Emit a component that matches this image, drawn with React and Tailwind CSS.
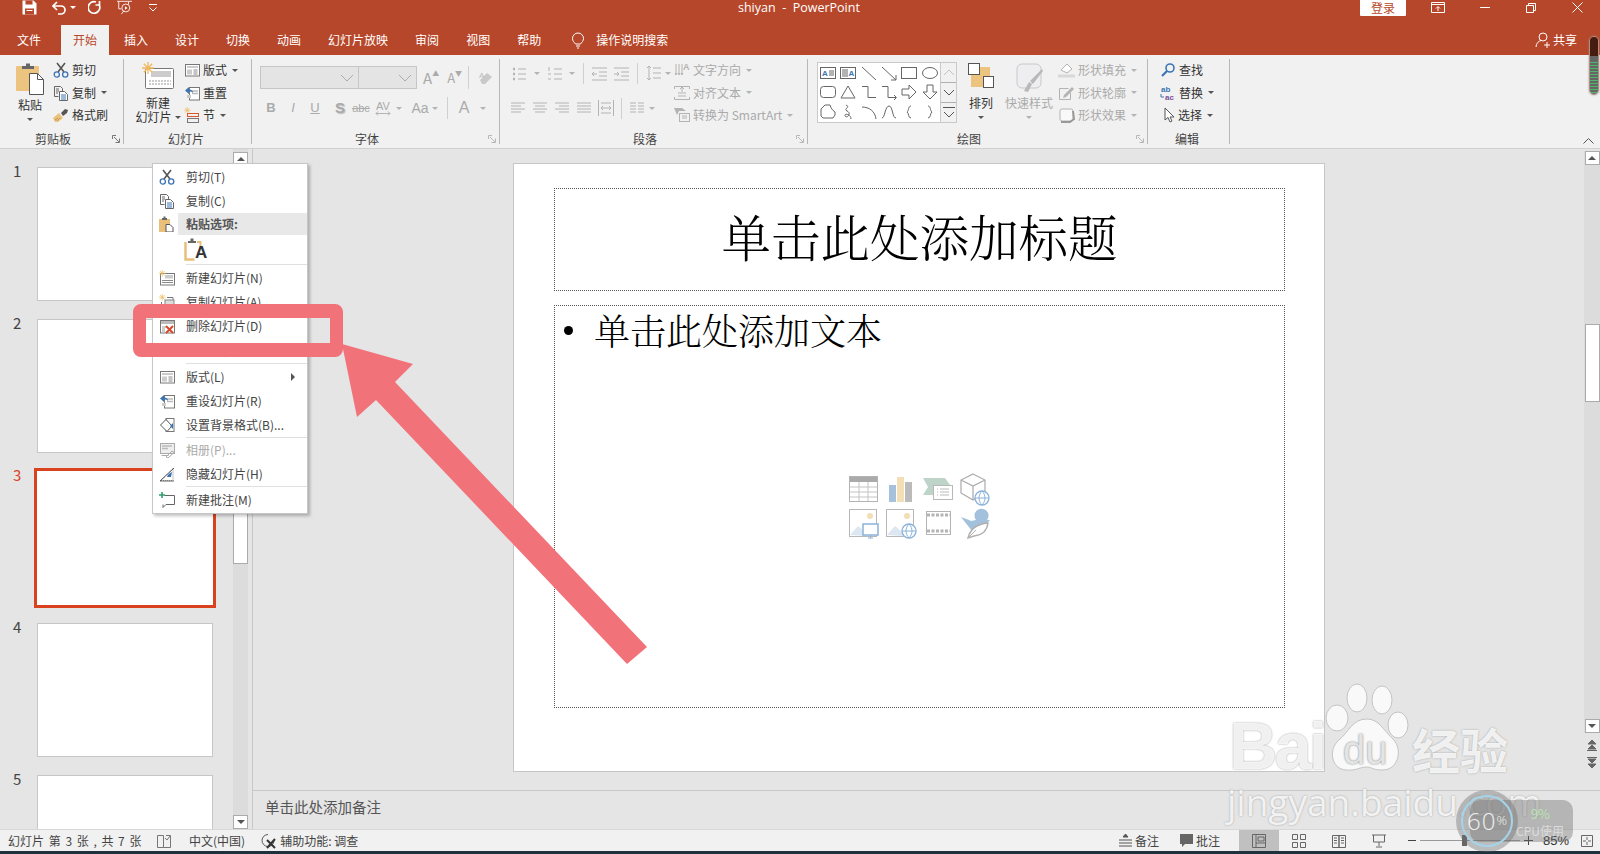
import { useState } from "react";

// small svg wrapper, every ribbon icon goes through this
const I = ({ w = 16, h = 16, vb, children, className = "" }) => (
  <svg width={w} height={h} viewBox={vb || `0 0 ${w} ${h}`} fill="none" className={`shrink-0 ${className}`}>
    {children}
  </svg>
);

const Caret = ({ dim, className = "" }) => (
  <span className={`inline-block h-0 w-0 shrink-0 border-x-[3px] border-t-[3px] border-x-transparent ${dim ? "border-t-[#b4b4b4]" : "border-t-[#555]"} ${className}`} />
);

const Launcher = ({ dim }) => (
  <I w={8} h={8}>
    <path d="M.5 4V.5H4M2 2l5 5M7.5 3.5v4h-4" stroke={dim ? "#b8b8b8" : "#777"} />
  </I>
);

/* ---- icons ---- */
const Cut = () => (
  <I>
    <path d="M4 1l7 9M12 1L5 10" stroke="#555" strokeWidth="1.6" />
    <circle cx="3.8" cy="12.5" r="2.6" stroke="#3b74b3" strokeWidth="1.3" />
    <circle cx="12.2" cy="12.5" r="2.6" stroke="#3b74b3" strokeWidth="1.3" />
  </I>
);
const Copy = () => (
  <I>
    <path d="M1.5 1.5h6l2 2v3M1.5 1.5v10h4" stroke="#666" />
    <path d="M3 4h3M3 6h3M3 8h2" stroke="#666" />
    <path d="M6.5 6.5h5l3 3v6h-8z" fill="#fff" stroke="#666" />
    <path d="M8 10h5M8 12h5M8 14h5" stroke="#3b74b3" />
  </I>
);
const Brush = () => (
  <I>
    <path d="M0 11l6-5 4 5-5 4H2z" fill="#eac27e" />
    <path d="M2 13l3-2M4 14l3-3" stroke="#c69a4c" />
    <path d="M8 6l4-4 3 1-1 3-4 3z" fill="#555" />
  </I>
);
const PasteBig = () => (
  <I w={30} h={34}>
    <rect x="1" y="4" width="23" height="25" rx="1" fill="#edc47f" />
    <path d="M7 7V4h4V1.5h4V4h4v3z" fill="#666" />
    <path d="M14.5 11.5h8l6 6v15h-14z" fill="#fff" stroke="#555" />
    <path d="M22.5 11.5v6h6" stroke="#555" />
  </I>
);
const PasteSmall = () => (
  <I>
    <rect x="1" y="3" width="11" height="13" fill="#e9bf79" />
    <path d="M4 4V2h1.5V.5h2V2H9v2z" fill="#666" />
    <path d="M8 8.5h4l3 3v4.500H8z" fill="#fff" stroke="#555" />
  </I>
);
const Star = ({ x = 0, y = 0, s = 1 }) => (
  <g transform={`translate(${x} ${y}) scale(${s})`} stroke="#eeb95f" strokeWidth="1.1">
    <path d="M5 0v10M0 5h10M1.500 1.500l7 7M8.500 1.500l-7 7" />
  </g>
);
const NewSlide = () => (
  <I>
    <rect x="1.500" y="3.500" width="14" height="11.500" fill="#fff" stroke="#777" />
    <rect x="6" y="5" width="8" height="3.500" fill="#ccc" />
    <path d="M3 10.500h11M3 12.500h11" stroke="#888" />
    <Star x={0} y={0} s={0.65} />
  </I>
);
const DupSlide = () => (
  <I>
    <Star x={0} y={0} s={0.65} />
    <path d="M8 3.500h6v3M2.500 8v7h8" stroke="#777" />
    <rect x="6" y="6" width="9" height="6" fill="#ddd" stroke="#888" />
  </I>
);
const DelSlide = () => (
  <I>
    <rect x="1.500" y="2.500" width="14" height="12.500" fill="#fff" stroke="#777" />
    <rect x="2" y="3" width="13" height="3" fill="#bbb" />
    <path d="M3 9h4M3 11h3M3 13h3" stroke="#999" />
    <path d="M7 8l7 7M14 8l-7 7" stroke="#d8492b" strokeWidth="2" />
  </I>
);
const Layout = () => (
  <I>
    <rect x="1.500" y="2.500" width="14" height="11.500" fill="#fff" stroke="#777" />
    <rect x="3" y="4" width="11" height="2" fill="#ccc" />
    <rect x="3" y="7.500" width="5" height="5" fill="#ccc" />
    <path d="M9.500 8h4M9.500 10h4M9.500 12h4" stroke="#888" />
  </I>
);
const Reset = () => (
  <I>
    <rect x="5.500" y="2.500" width="10" height="12.500" fill="#fff" stroke="#777" />
    <path d="M8 6h6M8 8.500h6" stroke="#bbb" strokeWidth="1.500" />
    <rect x="3" y="10" width="4" height="3" fill="#ccc" />
    <path d="M1 5.500L5 2v2.500c3 0 4 1.500 4 3.500-1-1.500-2-1.500-4-1.500V9z" fill="#3b74b3" />
  </I>
);
const Section = () => (
  <I>
    <Star x={0} y={0} s={0.65} />
    <rect x="3.500" y="6.500" width="11" height="3" stroke="#d8592b" />
    <rect x="3.500" y="11.500" width="11" height="4" stroke="#777" />
  </I>
);
const BgFormat = () => (
  <I>
    <rect x="7" y="1.500" width="8" height="13" fill="#fff" stroke="#777" />
    <path d="M1.500 8L7 2.500 13 9l-5 5.500z" fill="#fff" stroke="#555" />
    <path d="M11 9l3-3v6z" fill="#3b74b3" />
  </I>
);
const Album = () => (
  <I>
    <rect x="1.500" y="1.500" width="14" height="10" fill="#eee" stroke="#aaa" />
    <path d="M3 4h10M3 6.500h6" stroke="#bbb" strokeWidth="1.500" />
    <path d="M2.500 13.500h7M7 15l6-6 2 1.500-6 5.500z" stroke="#aaa" />
  </I>
);
const HideSlide = () => (
  <I>
    <path d="M2 14.500L14 2.500v12z" fill="#fff" stroke="#888" strokeDasharray="1 1" />
    <path d="M1 15h14" stroke="#666" />
    <path d="M1 15L15 2" stroke="#555" />
    <path d="M8 11c1-3 3-4 5-5l-1 5z" fill="#3b74b3" />
  </I>
);
const NewNote = () => (
  <I>
    <path d="M5.500 3.500h10v9H7l-3 3v-3" stroke="#666" />
    <path d="M3 0v6M0 3h6" stroke="#2f9e6e" strokeWidth="1.600" />
  </I>
);
const PasteA = () => (
  <svg width="18" height="23" viewBox="0 0 18 23" fill="none" className="shrink-0">
    <path d="M1.500 4v17.500h9" stroke="#e9bf79" strokeWidth="2.500" />
    <path d="M13 4h3.500v6" stroke="#e9bf79" strokeWidth="2" />
    <path d="M4 5V3h2.500V.5h3V3H12v2z" fill="#666" />
  </svg>
);

const Gal = ({ children }) => (
  <div className="flex items-center justify-center">
    <I>{children}</I>
  </div>
);
const shapeStroke = { stroke: "#666", fill: "none" };

function Shapes() {
  return (
    <div className="grid h-[59px] w-[122px] grid-cols-6 grid-rows-3 bg-white">
      <Gal>
        <rect x=".5" y="2.500" width="15" height="11" {...shapeStroke} />
        <text x="2" y="11" fontSize="8" fontWeight="700" fill="#3b74b3" fontFamily="Liberation Sans">A</text>
        <path d="M9 6h5M9 8h5M9 10h5" {...shapeStroke} />
      </Gal>
      <Gal>
        <rect x=".5" y="2.500" width="15" height="11" {...shapeStroke} />
        <path d="M3 4v8M5 4v8M7 4v8" {...shapeStroke} />
        <text x="8.500" y="11" fontSize="8" fontWeight="700" fill="#3b74b3" fontFamily="Liberation Sans">A</text>
      </Gal>
      <Gal><path d="M1 2l14 13" {...shapeStroke} /></Gal>
      <Gal><path d="M1 2l14 13M15 10v5h-5" {...shapeStroke} /></Gal>
      <Gal><rect x=".5" y="2.500" width="15" height="11" {...shapeStroke} /></Gal>
      <Gal><ellipse cx="8" cy="8" rx="7.500" ry="5.500" {...shapeStroke} /></Gal>
      <Gal><rect x=".5" y="2.500" width="15" height="11" rx="3" {...shapeStroke} /></Gal>
      <Gal><path d="M8 2l7 12H1z" {...shapeStroke} /></Gal>
      <Gal><path d="M1 2.500h6v11h8" {...shapeStroke} /></Gal>
      <Gal><path d="M1 2.500h6v11h8M13 11l2.500 2.500L13 16" {...shapeStroke} /></Gal>
      <Gal><path d="M1 5h7V1l7 7-7 7v-4H1z" {...shapeStroke} /></Gal>
      <Gal><path d="M5 1h6v7h4l-7 7-7-7h4z" {...shapeStroke} /></Gal>
      <Gal><path d="M1 5l4-4h5c1 3 2 5 5 7v3l-2 3H3l-2-2z" {...shapeStroke} /></Gal>
      <Gal><path d="M6 1c5 2-3 4 1 6 5 2 0 8-2 5-1-3 6-2 6 3" {...shapeStroke} /></Gal>
      <Gal><path d="M1 3c7 0 13 4 14 12" {...shapeStroke} /></Gal>
      <Gal><path d="M1 14c3 0 3-12 7-12s3 12 7 12" {...shapeStroke} /></Gal>
      <Gal><path d="M10 2C7 2 8 7 6 8c2 1 1 6 4 6" {...shapeStroke} /></Gal>
      <Gal><path d="M6 2c3 0 2 5 4 6-2 1-1 6-4 6" {...shapeStroke} /></Gal>
    </div>
  );
}

/* ---- ribbon pieces ---- */
const Group = ({ className, label, launcher, dim, children }) => (
  <div className={`flex h-full shrink-0 flex-col border-r border-[#b8b8b8] ${className}`}>
    <div className="flex h-[74px]">{children}</div>
    <div className="grid h-[11px] grid-cols-[1fr_auto_1fr] items-center pr-[3px] text-xs leading-[11px] text-[#444]">
      <span />
      <span className={launcher ? "mr-[14px]" : ""}>{label}</span>
      <span className="justify-self-end">{launcher && <Launcher dim={dim} />}</span>
    </div>
  </div>
);

const Small = ({ icon, text, caret, dim, className = "" }) => (
  <div className={`flex h-[22.5px] items-center whitespace-nowrap ${dim ? "text-[#aaa]" : "text-[#333]"} ${className}`}>
    {icon}
    <span className="ml-[3px]">{text}</span>
    {caret && <Caret dim={dim} className="ml-[5px]" />}
  </div>
);

const Tab = ({ children, active }) => (
  <div className={`flex h-[30px] items-center px-3 ${active ? "bg-[#f1f1f1] text-[#b7472a]" : "text-white"}`}>{children}</div>
);

const TitleBar = () => (
  <div className="flex h-[25px] shrink-0 items-center bg-[#b7472a] pb-[10px] text-white">
    <div className="flex w-[738px] items-center pl-[22px]">
      <I w={15} h={15} vb="0 0 15 15">
        <path d="M.5.500h11l3 3v11H.5z" fill="#fff" />
        <path d="M3.500.500h7v4h-7zM3 8.500h9v6H3z" fill="#b7472a" />
        <rect x="4.500" y="10" width="6" height="1" fill="#fff" />
      </I>
      <I w={14} h={14} className="ml-[15px]">
        <path d="M5 1L1 5l4 4M1.500 5H9a4 4 0 010 8H6" stroke="#fff" strokeWidth="1.700" />
      </I>
      <Caret className="ml-[4px] border-t-white!" />
      <I w={15} h={15} className="ml-[12px]">
        <path d="M11.500 1v4h-4M11 4.500A5.800 5.800 0 118 2" stroke="#fff" strokeWidth="1.700" />
      </I>
      <I w={17} h={15} vb="0 0 17 17" className="ml-[13px]">
        <path d="M0 1.500h17M2 2v8h3M13 2v3M8 12l-3 4" stroke="#fff" />
        <circle cx="10" cy="9" r="4.500" stroke="#fff" />
        <path d="M9 7l3 2-3 2z" fill="#fff" />
      </I>
      <I w={10} h={10} className="ml-[15px]">
        <path d="M1 1.500h8M1.500 4.500L5 8l3.500-3.500" stroke="#fff" />
      </I>
    </div>
    <div className="h-[15px] w-[622px] font-['Open_Sans',sans-serif] text-[12.500px] leading-[15px] whitespace-pre">shiyan  -  PowerPoint</div>
    <div className="flex h-[16px] w-[46px] items-center justify-center self-start rounded-b-[1px] bg-white text-xs leading-[16px] text-[#b7472a]">登录</div>
    <div className="flex flex-1 items-center">
      <I w={14} h={11} className="ml-[25px]">
        <path d="M.5.500h13v10H.5zM1 2.500h12M7 9V5M5 6.500L7 4.500l2 2" stroke="#fff" />
      </I>
      <div className="ml-[35px] h-[1px] w-[10px] bg-white" />
      <I w={10} h={10} className="ml-[36px]">
        <path d="M.5 2.500h7v7h-7zM2.500 2.500v-2h7v7h-2" stroke="#fff" />
      </I>
      <I w={11} h={11} className="ml-[36px]">
        <path d="M.5.500l10 10M10.500.500l-10 10" stroke="#fff" />
      </I>
    </div>
  </div>
);

const TabBar = () => (
  <div className="flex h-[30px] shrink-0 items-center bg-[#b7472a] pl-[5px] text-xs">
    <Tab>文件</Tab>
    <div className="ml-[8px] flex gap-[3px]">
      <Tab active>开始</Tab>
      <Tab>插入</Tab>
      <Tab>设计</Tab>
      <Tab>切换</Tab>
      <Tab>动画</Tab>
      <Tab>幻灯片放映</Tab>
      <Tab>审阅</Tab>
      <Tab>视图</Tab>
      <Tab>帮助</Tab>
    </div>
    <I w={14} h={17} className="ml-[18px]">
      <path d="M4.500 12C3 10 1.500 9 1.500 6.500a5.500 5.500 0 0111 0C12.500 9 11 10 9.500 12zM5 14h4M6 16h2" stroke="#fff" />
    </I>
    <span className="ml-[11px] text-white">操作说明搜索</span>
    <div className="ml-auto flex items-center pr-[23px] text-white">
      <I w={16} h={16}>
        <circle cx="8" cy="5" r="4" stroke="#fff" />
        <path d="M1 15c0-4 3-6 5-6.500M9 13h6M12 10v6" stroke="#fff" />
      </I>
      <span className="ml-[2px]">共享</span>
    </div>
  </div>
);

function Ribbon() {
  const gray = "#b3b3b3";
  return (
    <div className="flex h-[94px] shrink-0 border-b border-[#d0d0d0] bg-[#f1f1f1] pt-[4px] pb-[4px] text-xs">
      {/* clipboard */}
      <Group className="w-[124px]" label="剪贴板" launcher>
        <div className="ml-[15px] flex w-[30px] flex-col items-center pt-[3px] text-[#333]">
          <PasteBig />
          <span className="mt-[1px]">粘贴</span>
          <Caret className="mt-[5px]" />
        </div>
        <div className="ml-[8px] flex flex-col">
          <Small icon={<Cut />} text="剪切" />
          <Small icon={<Copy />} text="复制" caret />
          <Small icon={<Brush />} text="格式刷" />
        </div>
      </Group>

      {/* slides */}
      <Group className="w-[128px]" label="幻灯片">
        <div className="ml-[10px] flex w-[48px] flex-col items-center pt-[3px] text-[#333]">
          <I w={32} h={27}>
            <rect x="3.500" y="6.500" width="28" height="20" rx="1" fill="#fff" stroke="#777" />
            <rect x="9" y="9" width="20" height="6" fill="#ccc" />
            <path d="M7 19h22M7 22h22" stroke="#999" strokeDasharray="2 1" />
            <Star x={0} y={0} s={1.200} />
          </I>
          <span className="mt-[7px] leading-[14px]">新建</span>
          <span className="flex items-center whitespace-nowrap leading-[14px]">幻灯片<Caret className="ml-[3px]" /></span>
        </div>
        <div className="ml-[2px] flex flex-col">
          <Small icon={<Layout />} text="版式" caret />
          <Small icon={<Reset />} text="重置" />
          <Small icon={<Section />} text="节" caret />
        </div>
      </Group>

      {/* font, all disabled */}
      <Group className="w-[248px]" label="字体" launcher dim>
        <div className="flex flex-col pl-[8px]">
          <div className="mt-[7px] flex h-[23px] items-center">
            <div className="flex h-[23px] w-[99px] items-center justify-end border border-[#c6c6c6] bg-[#e4e4e4] pr-[4px]">
              <I w={14} h={8}><path d="M1 1l6 6 6-6" stroke="#aaa" /></I>
            </div>
            <div className="flex h-[23px] w-[58px] items-center justify-end border border-l-0 border-[#c6c6c6] bg-[#e4e4e4] pr-[4px]">
              <I w={14} h={8}><path d="M1 1l6 6 6-6" stroke="#aaa" /></I>
            </div>
            <span className="ml-[6px] text-[15px] text-[#aaa]">A</span>
            <span className="mb-[8px] text-[7px] text-[#aaa]">▲</span>
            <span className="ml-[8px] text-[13px] text-[#aaa]">A</span>
            <span className="mb-[8px] text-[7px] text-[#aaa]">▼</span>
            <div className="ml-[6px] h-[23px] w-[1px] bg-[#cfcfcf]" />
            <I w={16} h={16} className="ml-[9px]">
              <path d="M2 10l7-7 5 4-7 7H4z" fill="#c9c9c9" />
              <text x="1" y="8" fontSize="8" fill="#bbb" fontFamily="Liberation Sans">A</text>
            </I>
          </div>
          <div className="mt-[8px] flex h-[22px] items-center font-['Liberation_Sans',sans-serif] text-[#aaa]">
            <span className="w-[22px] text-center text-[13px] font-bold">B</span>
            <span className="w-[22px] text-center text-[13px] italic">I</span>
            <span className="w-[22px] text-center text-[13px] underline">U</span>
            <span className="ml-[3px] w-[22px] text-center text-[15px] font-bold [text-shadow:1px_1px_1px_#bbb]">S</span>
            <span className="w-[20px] text-center text-[11px] line-through">abc</span>
            <span className="ml-[4px] flex w-[16px] flex-col items-center text-[11px] leading-[10px]">AV<I w={16} h={5}><path d="M1 2.500h14M3 .5L1 2.500l2 2M13 .5l2 2-2 2" stroke={gray} /></I></span>
            <Caret dim className="ml-[5px]" />
            <span className="ml-[8px] w-[20px] text-center text-[14px]">Aa</span>
            <Caret dim className="ml-[2px]" />
            <div className="ml-[9px] h-[22px] w-[1px] bg-[#cfcfcf]" />
            <span className="ml-[10px] w-[12px] text-center text-[16px]">A</span>
            <Caret dim className="ml-[10px]" />
          </div>
        </div>
      </Group>

      {/* paragraph */}
      <Group className="w-[308px]" label="段落" launcher dim>
        <div className="flex w-[174px] flex-col pl-[11px]">
          <div className="mt-[3px] flex h-[23px] items-center">
            <I w={16} h={16}>
              <path d="M7 3h8M7 8h8M7 13h8" stroke={gray} />
              <path d="M2 3h2M2 8h2M2 13h2" stroke={gray} strokeWidth="2.500" />
            </I>
            <Caret dim className="ml-[7px]" />
            <I w={16} h={16} className="ml-[7px]">
              <path d="M7 3h8M7 8h8M7 13h8" stroke={gray} />
              <path d="M2 1v4M1 8h3M1 13h3" stroke={gray} />
            </I>
            <Caret dim className="ml-[6px]" />
            <div className="ml-[8px] h-[21px] w-[1px] bg-[#cfcfcf]" />
            <I w={17} h={16} className="ml-[7px]">
              <path d="M1 2h15M8 6h8M8 10h8M1 14h15M6 8H1M3 6L1 8l2 2" stroke={gray} />
            </I>
            <I w={17} h={16} className="ml-[5px]">
              <path d="M1 2h15M8 6h8M8 10h8M1 14h15M1 8h5M4 6l2 2-2 2" stroke={gray} />
            </I>
            <div className="ml-[7px] h-[21px] w-[1px] bg-[#cfcfcf]" />
            <I w={15} h={17} className="ml-[8px]">
              <path d="M3 1v14M1 3l2-2 2 2M1 13l2 2 2-2M7 3h8M7 8h8M7 13h8" stroke={gray} />
            </I>
            <Caret dim className="ml-[4px]" />
          </div>
          <div className="mt-[12px] flex h-[22px] items-center">
            <I w={14} h={14}><path d="M0 2h14M0 5h10M0 8h14M0 11h10" stroke={gray} /></I>
            <I w={14} h={14} className="ml-[8px]"><path d="M0 2h14M2 5h10M0 8h14M2 11h10" stroke={gray} /></I>
            <I w={14} h={14} className="ml-[8px]"><path d="M0 2h14M4 5h10M0 8h14M4 11h10" stroke={gray} /></I>
            <I w={14} h={14} className="ml-[8px]"><path d="M0 2h14M0 5h14M0 8h14M0 11h14" stroke={gray} /></I>
            <I w={16} h={16} className="ml-[7px]"><path d="M.5 0v16M15.500 0v16M3 8h10M5 6L3 8l2 2M11 6l2 2-2 2M3 3h10M3 13h10" stroke={gray} /></I>
            <div className="ml-[7px] h-[21px] w-[1px] bg-[#cfcfcf]" />
            <I w={14} h={14} className="ml-[8px]"><path d="M0 2h6M8 2h6M0 5h6M8 5h6M0 8h6M8 8h6M0 11h6M8 11h6" stroke={gray} /></I>
            <Caret dim className="ml-[5px]" />
          </div>
        </div>
        <div className="flex flex-col text-[#aaa]">
          <Small dim caret text="文字方向" icon={
            <I><path d="M2 2v10M5 2v10M8 2v10M1 11l1 2 1-2M4 11l1 2 1-2M7 11l1 2 1-2" stroke={gray} /><text x="9" y="8" fontSize="9" fontWeight="700" fill={gray} fontFamily="Liberation Sans">A</text></I>
          } />
          <Small dim caret text="对齐文本" icon={
            <I><path d="M.5 4V1.500h15V4M.5 12v2.500h15V12M4 8h8M4 11h8M8 2v5M6 4l2-2 2 2" stroke={gray} /></I>
          } />
          <Small dim caret text="转换为 SmartArt" icon={
            <I><path d="M0 1h8l4 3H5l-2 4z" fill={gray} /><rect x="5.500" y="6.500" width="10" height="8" fill="#f1f1f1" stroke={gray} /><path d="M8 9h5M8 11h5" stroke={gray} /></I>
          } />
        </div>
      </Group>

      {/* drawing */}
      <Group className="w-[340px]" label="绘图" launcher dim>
        <div className="ml-[9px] mt-[3px] flex h-[61px] border border-[#c9c9c9]">
          <Shapes />
          <div className="flex w-[16px] flex-col border-l border-[#c9c9c9]">
            <div className="flex flex-1 items-center justify-center"><I w={12} h={7}><path d="M1 6l5-5 5 5" stroke="#c4c4c4" /></I></div>
            <div className="flex flex-1 items-center justify-center border-y border-[#b0b0b0]"><I w={12} h={7}><path d="M1 1l5 5 5-5" stroke="#555" /></I></div>
            <div className="flex flex-1 flex-col items-center justify-center gap-[3px]"><div className="h-[1px] w-[12px] bg-[#555]" /><I w={12} h={7}><path d="M1 1l5 5 5-5" stroke="#555" /></I></div>
          </div>
        </div>
        <div className="ml-[9px] flex w-[30px] flex-col items-center pt-[3px] text-[#333]">
          <I w={28} h={27}>
            <rect x="11" y="5" width="12" height="12" fill="#edc47f" />
            <rect x="4" y="13" width="12" height="12" fill="#edc47f" />
            <rect x="1.500" y="1.500" width="11" height="11" fill="#fff" stroke="#555" />
            <rect x="16.500" y="14.500" width="10" height="11" fill="#fff" stroke="#555" />
          </I>
          <span className="mt-[6px] whitespace-nowrap">排列</span>
          <Caret className="mt-[5px]" />
        </div>
        <div className="ml-[8px] flex w-[50px] flex-col items-center pt-[4px] text-[#aaa]">
          <I w={27} h={30}>
            <rect x="1" y="1" width="24" height="24" rx="5" fill="#eeeef0" stroke="#c8c8c8" />
            <path d="M8 28l5-9 3 2-4 8zM14 18L26 6l1 2-10 13z" fill="#b8b8b8" />
          </I>
          <span className="mt-[2px] whitespace-nowrap">快速样式</span>
          <Caret dim className="mt-[5px]" />
        </div>
        <div className="ml-[4px] flex flex-col">
          <Small dim caret text="形状填充" icon={
            <I w={17} h={16}><path d="M3 8l6-6 5 5-5 4z" stroke={gray} fill="#fff" /><path d="M0 14h17" stroke="#d8d8d8" strokeWidth="3" /></I>
          } />
          <Small dim caret text="形状轮廓" icon={
            <I w={17} h={16}><path d="M1.500 3.500h9M1.500 3.500v11h11v-7" stroke={gray} /><path d="M6 10l8-8 2 2-8 8-3 1z" fill={gray} /></I>
          } />
          <Small dim caret text="形状效果" icon={
            <I w={17} h={16}><rect x="2" y="2" width="13" height="12" rx="2" fill="#f9f9f9" stroke={gray} /><path d="M15 4l1 8-4 3H3" stroke="#999" strokeWidth="2" /></I>
          } />
        </div>
      </Group>

      {/* editing */}
      <Group className="w-[82px]" label="编辑">
        <div className="ml-[12px] flex flex-col">
          <Small text="查找" icon={
            <I><circle cx="10" cy="6" r="4" stroke="#3b74b3" strokeWidth="1.600" /><path d="M7 9l-5 5" stroke="#3b74b3" strokeWidth="2.200" /></I>
          } />
          <Small caret text="替换" icon={
            <I>
              <text x="1" y="7" fontSize="8" fontWeight="700" fill="#3b74b3" fontFamily="Liberation Sans">ab</text>
              <text x="5" y="15" fontSize="8" fontWeight="700" fill="#7a4f9a" fontFamily="Liberation Sans">ac</text>
              <path d="M1 9v3h3" stroke="#3b74b3" />
            </I>
          } />
          <Small caret text="选择" className="pl-[4px]" icon={
            <I w={11} h={16}><path d="M1 1v12l3-2.500 2 4.500 2-1-2-4h4z" stroke="#555" fill="#fff" /></I>
          } />
        </div>
      </Group>

      <div className="flex flex-1 items-end justify-end pr-[6px]">
        <I w={11} h={6}><path d="M.5 5.500L5.500.5l5 5" stroke="#555" /></I>
      </div>
    </div>
  );
}

/* ---- left slide list ---- */
const Thumb = ({ n, active }) => (
  <div className="flex">
    <span className={`mt-[-7px] w-[37px] pl-[13px] text-[15px] ${active ? "text-[#d9421f]" : "text-[#444]"}`}>{n}</span>
    <div className={`h-[134px] w-[176px] shrink-0 bg-white ${active ? "outline-[3px] outline-[#d9421f]" : "border border-[#c6c6c6]"}`} />
  </div>
);

const ScrollBtn = ({ up }) => (
  <div className="flex h-[14px] w-[15px] shrink-0 items-center justify-center border border-[#ababab] bg-white">
    <span className={`h-0 w-0 border-x-[4px] border-x-transparent ${up ? "border-b-[4px] border-b-[#555]" : "border-t-[4px] border-t-[#555]"}`} />
  </div>
);

const SlideList = () => (
  <div className="flex w-[253px] shrink-0 border-r border-[#c8c8c8]">
    <div className="flex h-full w-[233px] shrink-0 flex-col gap-[18px] overflow-hidden pt-[18px]">
      <Thumb n="1" />
      <Thumb n="2" />
      <Thumb n="3" active />
      <Thumb n="4" />
      <Thumb n="5" />
    </div>
    <div className="flex h-full w-[15px] flex-col justify-between bg-[#dcdcdc] pt-[3px]">
      <ScrollBtn up />
      <div className="h-[147px] w-[15px] border border-[#ababab] bg-white" />
      <ScrollBtn />
    </div>
  </div>
);

/* ---- context menu ---- */
const MenuRow = ({ icon, text, dim, arrow }) => (
  <div className={`flex h-[24px] items-center ${dim ? "text-[#aaa]" : "text-[#444]"}`}>
    <div className="w-[33px] pl-[6px]">{icon}</div>
    <span className="whitespace-nowrap">{text}</span>
    {arrow && <span className="mr-[12px] ml-auto h-0 w-0 border-y-[4px] border-l-[4px] border-y-transparent border-l-[#555]" />}
  </div>
);
const MenuSep = ({ className = "my-[1px]" }) => <div className={`ml-[33px] h-[1px] bg-[#e0e0e0] ${className}`} />;

const ContextMenu = () => (
  <div className="absolute top-[163px] left-[152px] z-10 h-[351px] w-[156px] border border-[#c6c6c6] bg-white pt-[1px] text-xs shadow-[2px_2px_3px_rgba(0,0,0,0.25)]">
    <MenuRow icon={<Cut />} text="剪切(T)" />
    <MenuRow icon={<Copy />} text="复制(C)" />
    <div className="flex h-[22px] items-center">
      <div className="flex w-[25px] justify-center pl-[1px]"><PasteSmall /></div>
      <div className="flex h-[22px] flex-1 items-center bg-[#e8e8e8] pl-[8px] font-bold text-[#555]">粘贴选项:</div>
    </div>
    <div className="flex h-[28px] items-center pl-[31px]">
      <PasteA />
      <span className="ml-[-7px] self-end font-['Liberation_Sans',sans-serif] text-[17px] leading-[21px] font-bold text-[#333]">A</span>
    </div>
    <MenuSep />
    <MenuRow icon={<NewSlide />} text="新建幻灯片(N)" />
    <MenuRow icon={<DupSlide />} text="复制幻灯片(A)" />
    <MenuRow icon={<DelSlide />} text="删除幻灯片(D)" />
    <MenuRow text="新增节(A)" />
    <MenuSep />
    <MenuRow icon={<Layout />} text="版式(L)" arrow />
    <MenuRow icon={<Reset />} text="重设幻灯片(R)" />
    <MenuRow icon={<BgFormat />} text="设置背景格式(B)..." />
    <MenuSep className="" />
    <MenuRow dim icon={<Album />} text="相册(P)..." />
    <MenuRow icon={<HideSlide />} text="隐藏幻灯片(H)" />
    <MenuSep className="mb-[1px]" />
    <MenuRow icon={<NewNote />} text="新建批注(M)" />
  </div>
);

/* ---- slide canvas ---- */
const tile = "flex items-center justify-center";
const ContentIcons = () => (
  <div className="mx-auto mt-[119px] grid w-[148px] grid-cols-4 gap-y-[2px]">
    <div className={tile}>
      <I w={30} h={27}>
        <rect x=".5" y=".5" width="28" height="25" stroke="#b4b4b4" fill="#fff" />
        <rect x="1" y="1" width="27" height="5" fill="#aaa" />
        <path d="M1 11h27M1 16h27M1 21h27M10 6v19M19 6v19" stroke="#c4c4c4" />
      </I>
    </div>
    <div className={tile}>
      <I w={24} h={27}>
        <rect x="0" y="9" width="7" height="17" fill="#a7c1dc" />
        <rect x="8" y="1" width="7" height="25" fill="#f3deb6" />
        <rect x="16" y="6" width="7" height="20" fill="#bbb" />
      </I>
    </div>
    <div className={tile}>
      <I w={30} h={25}>
        <path d="M0 1h22l5 7H10v10H0l5-8z" fill="#bed4c9" />
        <rect x="10.500" y="8.500" width="19" height="14" fill="#fff" stroke="#b8b8b8" />
        <path d="M14 12h1M17 12h9M14 15h1M17 15h9M14 18h1M17 18h9" stroke="#b8b8b8" />
      </I>
    </div>
    <div className={tile}>
      <I w={30} h={33}>
        <path d="M13 1l12 6v13l-12 7L1 20V7zM1 7l12 6 12-6M13 13v14" stroke="#aaa" strokeWidth="1.200" fill="#fff" />
        <circle cx="22" cy="25" r="7" fill="#fff" stroke="#8ab3da" strokeWidth="1.300" />
        <path d="M15 25h14M22 18c-4 4-4 10 0 14M22 18c4 4 4 10 0 14" stroke="#8ab3da" />
      </I>
    </div>
    <div className={tile}>
      <I w={31} h={30}>
        <rect x=".5" y=".5" width="27" height="27" stroke="#b8b8b8" fill="#fff" />
        <circle cx="21" cy="7" r="3" fill="#f3deb6" />
        <path d="M1 26l8-9 6 5 2 5z" fill="#dce7f1" />
        <rect x="14" y="15" width="15" height="11" fill="#fff" stroke="#8ab3da" strokeWidth="1.500" />
        <path d="M19 29h5M21.500 26v3" stroke="#8ab3da" />
      </I>
    </div>
    <div className={tile}>
      <I w={31} h={30}>
        <rect x=".5" y=".5" width="27" height="27" stroke="#b8b8b8" fill="#fff" />
        <circle cx="21" cy="7" r="3" fill="#f3deb6" />
        <path d="M1 26l8-9 6 5 2 5z" fill="#dce7f1" />
        <circle cx="23" cy="22" r="7" fill="#fff" stroke="#8ab3da" strokeWidth="1.300" />
        <path d="M16 22h14M23 15c-4 4-4 10 0 14M23 15c4 4 4 10 0 14" stroke="#8ab3da" />
      </I>
    </div>
    <div className={tile}>
      <I w={25} h={26}>
        <rect x=".5" y=".5" width="24" height="23" fill="#fff" stroke="#b4b4b4" />
        <path d="M1 4h23M1 20h23" stroke="#b4b4b4" strokeWidth="3" strokeDasharray="3 1.500" />
      </I>
    </div>
    <div className={tile}>
      <I w={30} h={31}>
        <path d="M16 12a7 7 0 1 1 11 0l3 0-3 3-4 8H12L1 9c3 1 8 3 10 4z" fill="#a3c0dc" />
        <path d="M8 30c2-8 8-14 20-15-1 8-5 12-14 13z" fill="#fff" stroke="#b0b0b0" strokeWidth="1.400" />
        <path d="M8 30l8-8" stroke="#b0b0b0" />
      </I>
    </div>
  </div>
);

const SlideCanvas = () => (
  <div className="h-[609px] w-[812px] shrink-0 border border-[#c6c6c6] bg-white pt-[24px] pl-[40px] font-['Noto_Serif_CJK_SC','Noto_Sans_CJK_SC',serif] text-black">
    <div className="flex h-[103px] w-[731px] items-center justify-center border border-dotted border-[#555] pb-[6px] text-[49.500px] font-light">
      单击此处添加标题
    </div>
    <div className="mt-[14px] h-[403px] w-[731px] border border-dotted border-[#555]">
      <div className="flex h-[48px] items-center pl-[9px] text-[36px] font-light">
        <span className="h-[9px] w-[9px] rounded-full bg-black" />
        <span className="ml-[21px]">单击此处添加文本</span>
      </div>
      <ContentIcons />
    </div>
  </div>
);

const RightScroll = () => (
  <div className="flex h-full w-[16px] shrink-0 flex-col items-center">
    <div className="mt-[2px] flex h-[582px] w-[16px] flex-col items-center bg-[#dcdcdc]">
      <ScrollBtn up />
      <div className="mt-[159px] h-[78px] w-[15px] border border-[#ababab] bg-white" />
      <div className="flex-1" />
      <ScrollBtn />
    </div>
    <I w={14} h={14} className="mt-[5px]"><path d="M3 6l4-4 4 4zM3 11l4-4 4 4zM2 12.500h10" stroke="#666" fill="#666" /></I>
    <I w={14} h={14} className="mt-[4px]"><path d="M2 1.500h10M3 3l4 4 4-4zM3 8l4 4 4-4z" stroke="#666" fill="#666" /></I>
  </div>
);

/* ---- status bar ---- */
const ViewBtn = ({ children, active, className = "" }) => (
  <div className={`flex h-[22px] w-[40px] items-center justify-center ${active ? "bg-[#c0c0c0]" : ""} ${className}`}>{children}</div>
);

const StatusBar = () => (
  <div className="flex h-[22px] shrink-0 items-center border-t border-[#d8d8d8] bg-[#f1f1f1] pl-[8px] text-xs text-[#444]">
    <span className="w-[149px] whitespace-pre [word-spacing:2px]">幻灯片 第 3 张 , 共 7 张</span>
    <I w={14} h={14}><path d="M.5 1.500h6v12h-6zM6.500 3.500v10h7v-12H9M8 4l2 2 3-4" stroke="#777" /></I>
    <span className="ml-[18px] whitespace-nowrap">中文(中国)</span>
    <I w={16} h={16} className="ml-[16px]">
      <path d="M7 1.500A6 6 0 1013 8" stroke="#555" />
      <path d="M6 7l8 8M14 6l-8 9" stroke="#333" strokeWidth="2" />
    </I>
    <span className="ml-[3px] whitespace-nowrap">辅助功能: 调查</span>
    <div className="ml-auto flex items-center">
      <I w={13} h={13}><path d="M6.500 0L9 3H4zM0 6h13M0 9h13M0 12h13" stroke="#555" fill="#555" /></I>
      <span className="ml-[3px]">备注</span>
      <I w={15} h={15} className="ml-[20px]"><path d="M1 1h13v10H6l-3 3v-3H1z" fill="#666" /></I>
      <span className="ml-[2px]">批注</span>
      <div className="ml-[19px] flex">
        <ViewBtn active><I w={14} h={14}><path d="M.5.500h13v13H.5zM4 .5v13M4 9h10M6 3h6v4H6z" stroke="#666" /></I></ViewBtn>
        <ViewBtn><I w={14} h={14}><path d="M.5.500h5v5h-5zM8.500.500h5v5h-5zM.5 8.500h5v5h-5zM8.500 8.500h5v5h-5z" stroke="#666" /></I></ViewBtn>
        <ViewBtn><I w={14} h={14}><path d="M.5 1.500h6.500v12H.5zM7 1.500h6.500v12H7zM2 4h3M2 6.500h3M2 9h3M9 4h3M9 6.500h3M9 9h3" stroke="#666" /></I></ViewBtn>
        <ViewBtn><I w={14} h={14}><path d="M0 1h14M1.500 1v7h11V1M7 8v4M4 13h6" stroke="#666" /></I></ViewBtn>
      </div>
      <div className="ml-[9px] h-[1px] w-[8px] bg-[#444]" />
      <div className="ml-[4px] flex h-[14px] w-[100px] items-center">
        <div className="h-[1px] w-[42px] bg-[#999]" />
        <div className="h-[11px] w-[5px] bg-[#666]" />
        <div className="h-[1px] w-[53px] bg-[#999]" />
      </div>
      <I w={9} h={9} className="ml-[4px]"><path d="M4.500 0v9M0 4.500h9" stroke="#444" /></I>
      <span className="ml-[10px] font-['Liberation_Sans',sans-serif] text-[13px] text-[#333]">85%</span>
      <I w={12} h={12} className="mr-[7px] ml-[12px]"><path d="M.5.500h11v11H.5zM6 2v3M6 7v3M2 6h3M7 6h3" stroke="#666" /></I>
    </div>
  </div>
);

/* ---- things pasted on top of the screenshot ---- */
const RedMark = () => (
  <svg className="pointer-events-none absolute top-0 left-0 z-20" width="1600" height="854" fill="none">
    <path fillRule="evenodd" d="M141 304H335a8 8 0 018 8V349a8 8 0 01-8 8H141a8 8 0 01-8-8V312a8 8 0 018-8zM146 318V343H330V318z" fill="#f2727a" />
    <path d="M342 344L413 364L395 382L647 647L627 664L376 400L357 417Z" fill="#f2727a" />
  </svg>
);

const Watermark = () => (
  <div className="pointer-events-none absolute inset-0 z-30">
    <div className="absolute top-[708px] left-[1229px] font-['Liberation_Sans',sans-serif] text-[67px] leading-[75px] font-bold tracking-[-3px] text-white/85 [text-shadow:0_0_2px_#999]">Bai</div>
    <svg className="absolute top-[682px] left-[1325px]" width="85" height="94" viewBox="0 0 85 94">
      <g fill="#fff" fillOpacity=".78" stroke="#c4c4c4">
        <ellipse cx="32" cy="16" rx="10" ry="14" />
        <ellipse cx="57" cy="18" rx="10" ry="14" />
        <ellipse cx="12" cy="36" rx="11" ry="13" />
        <ellipse cx="73" cy="43" rx="10" ry="13" />
        <path d="M42 37c12 0 17 12 26 20 10 10 6 32-12 31-8 0-9-3-15-3s-10 4-20 3C6 87 3 67 14 58c10-8 13-21 28-21z" />
      </g>
    </svg>
    <div className="absolute top-[727px] left-[1343px] font-['Liberation_Sans',sans-serif] text-[40px] leading-[46px] text-[#e4e4e4] [text-shadow:0_0_2px_#777]">du</div>
    <div className="absolute top-[718px] left-[1412px] font-['Noto_Sans_CJK_SC',sans-serif] text-[48px] leading-[60px] font-bold text-white/85 [text-shadow:0_0_2px_#999]">经验</div>
    <div className="absolute top-[778px] left-[1227px] font-['Open_Sans',sans-serif] text-[37px] leading-[48px] text-white/85 [text-shadow:0_0_2px_#999]">jingyan.baidu.com</div>
    {/* cpu widget */}
    <div className="absolute top-[800px] left-[1470px] flex h-[42px] w-[103px] flex-col items-end rounded-[10px] bg-[rgba(110,110,110,0.4)] pr-[9px] text-[13px] leading-[15px]">
      <span className="mt-[6px] mr-[14px] text-[#b8e3b0]">9%</span>
      <span className="mt-[2px] font-['Noto_Sans_CJK_SC',sans-serif] text-[12px] whitespace-nowrap text-white/50">CPU使用</span>
    </div>
    <div className="absolute top-[790px] left-[1456px] flex h-[62px] w-[62px] items-center justify-center rounded-full bg-[rgba(110,110,110,0.4)]">
      <div className="flex h-[52px] w-[52px] items-center justify-center rounded-full border-2 border-[#a5d4ea] font-['Open_Sans',sans-serif] text-[24px] font-light tracking-[1px] text-white/85">
        60<span className="text-[13px] tracking-normal">%</span>
      </div>
    </div>
    {/* green memory meter */}
    <div className="absolute top-[36px] left-[1589px] flex h-[59px] w-[10px] flex-col overflow-hidden rounded-full border border-[#b98b7f] shadow-[0_0_2px_#888]">
      <div className="h-[19px] bg-[#451c10]" />
      <div className="h-[6px] bg-[#666]" />
      <div className="flex-1 bg-[repeating-linear-gradient(#4fb668_0,#4fb668_1px,#666_1px,#666_3px)]" />
    </div>
  </div>
);

export default function App() {
  const [slide] = useState(3);
  return (
    <div data-slide={slide} className="relative flex h-[854px] w-[1600px] flex-col overflow-hidden bg-[#e5e5e5] font-['Noto_Sans_CJK_SC','Noto_Sans',sans-serif]">
      <TitleBar />
      <TabBar />
      <Ribbon />
      <div className="flex min-h-0 flex-1">
        <SlideList />
        <div className="flex min-w-0 flex-1 flex-col">
          <div className="flex h-[641px] shrink-0">
            <div className="flex flex-1 pt-[14px] pl-[260px]">
              <SlideCanvas />
            </div>
            <RightScroll />
          </div>
          <div className="flex flex-1 items-center border-t border-[#c8c8c8] pb-[6px] pl-[12px] text-[14.500px] text-[#555]">单击此处添加备注</div>
        </div>
      </div>
      <StatusBar />
      <div className="h-[3px] shrink-0 bg-[#20303c]" />
      <ContextMenu />
      <RedMark />
      <Watermark />
    </div>
  );
}
